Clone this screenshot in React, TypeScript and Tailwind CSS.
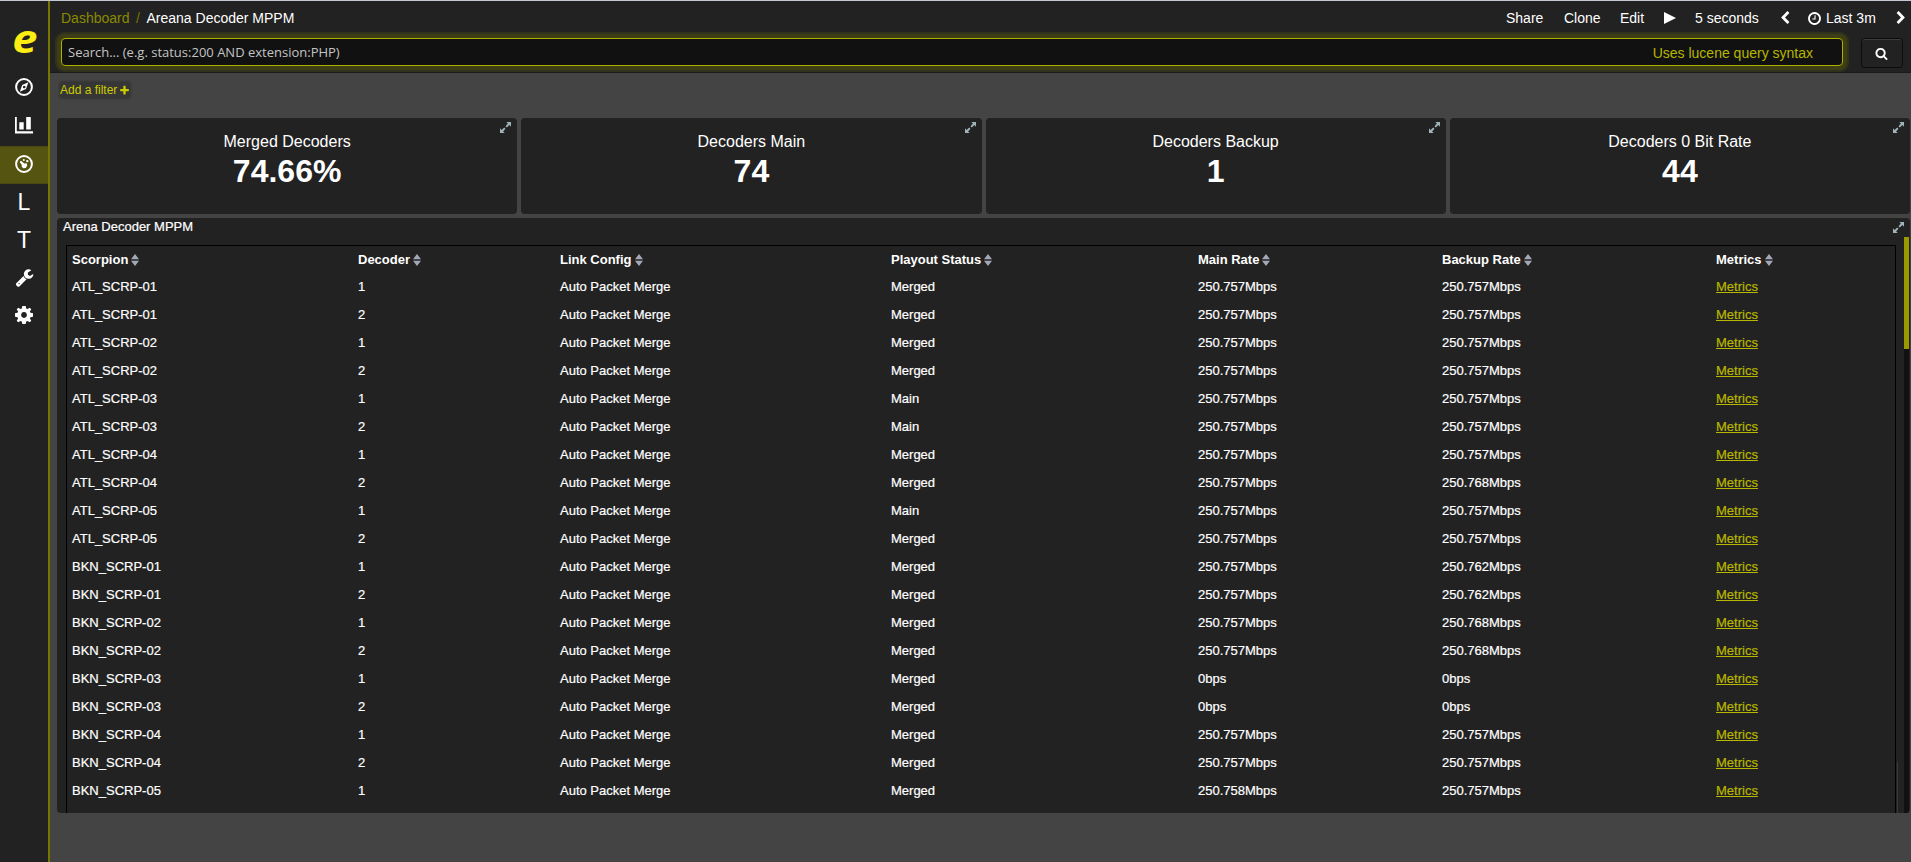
import React from "react";

const FA = {
  plus: "M1600 736v192q0 40-28 68t-68 28h-416v416q0 40-28 68t-68 28h-192q-40 0-68-28t-28-68v-416h-416q-40 0-68-28t-28-68v-192q0-40 28-68t68-28h416v-416q0-40 28-68t68-28h192q40 0 68 28t28 68v416h416q40 0 68 28t28 68z",
  search:
    "M1216 832q0-185-131.5-316.5t-316.5-131.5-316.5 131.5-131.5 316.5 131.5 316.5 316.5 131.5 316.5-131.5 131.5-316.5zm512 832q0 52-38 90t-90 38q-54 0-90-38l-343-342q-179 124-399 124-143 0-273.5-55.5t-225-150-150-225-55.5-273.5 55.5-273.5 150-225 225-150 273.5-55.5 273.5 55.5 225 150 150 225 55.5 273.5q0 220-124 399l343 343q37 37 37 90z",
  left: "M1427 301l-531 531 531 531q19 19 19 45t-19 45l-166 166q-19 19-45 19t-45-19l-742-742q-19-19-19-45t19-45l742-742q19-19 45-19t45 19l166 166q19 19 19 45t-19 45z",
  right:
    "M1363 877l-742 742q-19 19-45 19t-45-19l-166-166q-19-19-19-45t19-45l531-531-531-531q-19-19-19-45t19-45l166-166q19-19 45-19t45 19l742 742q19 19 19 45t-19 45z",
  clock:
    "M1024 544v448q0 14-9 23t-23 9h-320q-14 0-23-9t-9-23v-64q0-14 9-23t23-9h224v-352q0-14 9-23t23-9h64q14 0 23 9t9 23zm416 352q0-148-73-273t-198-198-273-73-273 73-198 198-73 273 73 273 198 198 273 73 273-73 198-198 73-273zm224 0q0 209-103 385.5t-279.5 279.5-385.5 103-385.5-103-279.5-279.5-103-385.5 103-385.5 279.5-279.5 385.5-103 385.5 103 279.5 279.5 103 385.5z",
  wrench:
    "M448 1472q0-26-19-45t-45-19-45 19-19 45 19 45 45 19 45-19 19-45zm644-420l-682 682q-37 37-90 37-52 0-91-37l-106-108q-38-36-38-90 0-53 38-91l681-681q39 98 114.500 173.500t173.500 114.500zm634-435q0 39-23 106-47 134-164.500 217.500t-258.500 83.500q-185 0-316.500-131.500t-131.500-316.500 131.500-316.500 316.500-131.500q58 0 121.500 16.500t107.500 46.500q16 11 16 28t-16 28l-293 169v224l193 107q5-3 79-48.500t135.500-81 70.500-35.500q15 0 23.500 10t8.500 25z",
};

function Glyph({ d, className }: { d: string; className: string }) {
  return (
    <svg viewBox="0 0 1792 1792" className={className} fill="currentColor">
      <path d={d} />
    </svg>
  );
}

function Compass() {
  return (
    <svg viewBox="0 0 18 18" className="size-[18px]">
      <circle cx="9" cy="9" r="7.9" fill="none" stroke="#fff" strokeWidth="2" />
      <path fill="#fff" fillRule="evenodd" d="M13.400 4.300 11 11 4.800 13.700 7.200 7zM9.200 7.700a1.300 1.300 0 1 0 .01 0z" />
    </svg>
  );
}

function Bars() {
  return (
    <svg viewBox="0 0 18 17" className="h-[17px] w-[18px]" fill="#fff">
      <path d="M0 0h1.800v14.300H18V16.500H0z" />
      <path d="M4.300 5.200h4.400v7.300H4.300zM11.200 0h4.600v12.500h-4.600z" />
    </svg>
  );
}

function Gauge() {
  return (
    <svg viewBox="0 0 18 18" className="mt-px size-[18px]" fill="#fff">
      <circle cx="9" cy="9" r="7.9" fill="none" stroke="#fff" strokeWidth="2" />
      <path d="M4.600 6.900L6 5.800l3.300 2.700 2.300-.2.700 2.200-1.500 2.600-2.600.2-1.600-1.900.3-1.500z" />
      <circle cx="8.800" cy="5" r="1" />
      <circle cx="12.300" cy="6.100" r="1.200" />
    </svg>
  );
}

function Gear() {
  return (
    <svg viewBox="-9 -9 18 18" className="size-[18px]" fill="#fff">
      <path
        fillRule="evenodd"
        d="M-1.700-9h3.400l.5 2.500 1.300.6L5.700-7.300 7.300-5.700 5.900-3.500l.6 1.300L9-1.700v3.400l-2.500.5-.6 1.300L7.300 5.700 5.700 7.300 3.500 5.900l-1.300.6L1.700 9h-3.400l-.5-2.500-1.300-.6L-5.700 7.300-7.300 5.700-5.900 3.500l-.6-1.300L-9 1.700v-3.400l2.500-.5.6-1.300L-7.300-5.700-5.700-7.300-3.500-5.900l1.300-.6zM0-2.900a2.900 2.900 0 1 0 .01 0z"
      />
    </svg>
  );
}

function Expand() {
  return (
    <svg viewBox="0 0 11 11" className="absolute right-[6px] top-[4px] size-[11px]" fill="#9fb3b8">
      <path d="M6.300 0H11v4.700L9.400 3.100 6.800 5.500 5.500 4.200 7.900 1.600zM4.700 11H0V6.300l1.600 1.600L4.200 5.500 5.500 6.800 3.100 9.400z" />
    </svg>
  );
}

function Sort() {
  return (
    <svg viewBox="0 0 8 12" className="ml-[3px] h-3 w-2" fill="#a3a8b8">
      <path d="M4 0l4 5.200H0zM4 12l4-5.200H0z" />
    </svg>
  );
}

const nav = [
  { id: "discover", icon: <Compass /> },
  { id: "visualize", icon: <Bars /> },
  { id: "dashboard", icon: <Gauge />, active: true },
  { id: "l", icon: <span className="pt-[3px] text-[23px] leading-none">L</span> },
  { id: "t", icon: <span className="pt-[3px] text-[23px] leading-none">T</span> },
  { id: "tools", icon: <Glyph d={FA.wrench} className="size-[19px]" /> },
  { id: "management", icon: <Gear /> },
];

const stats = [
  ["Merged Decoders", "74.66%"],
  ["Decoders Main", "74"],
  ["Decoders Backup", "1"],
  ["Decoders 0 Bit Rate", "44"],
];

const cols = "grid grid-cols-[286px_202px_331px_307px_244px_274px_1fr] pl-[5px]";
const headings = ["Scorpion", "Decoder", "Link Config", "Playout Status", "Main Rate", "Backup Rate", "Metrics"];

const a = "250.757Mbps";
const rows: [string, number, string, string, string][] = [
  ["ATL_SCRP-01", 1, "Merged", a, a],
  ["ATL_SCRP-01", 2, "Merged", a, a],
  ["ATL_SCRP-02", 1, "Merged", a, a],
  ["ATL_SCRP-02", 2, "Merged", a, a],
  ["ATL_SCRP-03", 1, "Main", a, a],
  ["ATL_SCRP-03", 2, "Main", a, a],
  ["ATL_SCRP-04", 1, "Merged", a, a],
  ["ATL_SCRP-04", 2, "Merged", a, "250.768Mbps"],
  ["ATL_SCRP-05", 1, "Main", a, a],
  ["ATL_SCRP-05", 2, "Merged", a, a],
  ["BKN_SCRP-01", 1, "Merged", a, "250.762Mbps"],
  ["BKN_SCRP-01", 2, "Merged", a, "250.762Mbps"],
  ["BKN_SCRP-02", 1, "Merged", a, "250.768Mbps"],
  ["BKN_SCRP-02", 2, "Merged", a, "250.768Mbps"],
  ["BKN_SCRP-03", 1, "Merged", "0bps", "0bps"],
  ["BKN_SCRP-03", 2, "Merged", "0bps", "0bps"],
  ["BKN_SCRP-04", 1, "Merged", a, a],
  ["BKN_SCRP-04", 2, "Merged", a, a],
  ["BKN_SCRP-05", 1, "Merged", "250.758Mbps", a],
];

export default function App() {
  return (
    <div className="flex h-[862px] w-[1911px] overflow-hidden border-t border-[#c4c8d4] bg-[#444] font-['Liberation_Sans',Arial,sans-serif] text-white">
      <aside className="flex w-[50px] shrink-0 flex-col border-r-2 border-[#777700] bg-[#222]">
        <div className="flex h-[69px] items-center justify-center pl-[2px] pt-[3px]">
          <span className="block origin-center scale-x-[1.16] font-['Open_Sans',sans-serif] text-[39px] font-bold italic leading-none text-[#fcee12]">
            e
          </span>
        </div>
        {nav.map((n) => (
          <div
            key={n.id}
            className={
              n.active
                ? "flex h-[38px] items-center justify-center border-y border-[#4a4a10] bg-[#555511] pb-1"
                : "flex h-[38px] items-center justify-center pb-1"
            }
          >
            {n.icon}
          </div>
        ))}
      </aside>

      <main className="flex min-w-0 flex-1 flex-col">
        <header className="h-[72px] border-b border-[#1a1a1a] bg-[#222] pl-[11px] text-[14px]">
          <div className="flex h-[37px] items-center pb-[3px]">
            <span className="text-[#8a8a00]">Dashboard</span>
            <span className="w-[17px] text-center text-[#777700]">/</span>
            <span>Areana Decoder MPPM</span>
            <div className="ml-auto flex items-center pr-[3px]">
              <span className="w-[58px]">Share</span>
              <span className="w-[56px]">Clone</span>
              <span className="w-[44px]">Edit</span>
              <svg viewBox="0 0 12 12" className="mr-[19px] size-3" fill="#fff">
                <path d="M0 0l12 6L0 12z" />
              </svg>
              <span className="w-[83px]">5 seconds</span>
              <Glyph d={FA.left} className="mr-[15px] size-[14px]" />
              <Glyph d={FA.clock} className="mr-[4px] size-[15px]" />
              <span className="w-[68px]">Last 3m</span>
              <Glyph d={FA.right} className="size-[14px]" />
            </div>
          </div>
          <div className="flex">
            <div className="flex h-[28px] w-[1782px] items-center justify-between rounded-[4px] border border-[#b0b000] bg-[#111] pl-[6px] pr-[29px] shadow-[0_0_0_4px_rgba(119,119,0,0.16),0_0_1px_6px_rgba(119,119,0,0.2)]">
              <span className="pt-px font-['Open_Sans',sans-serif] text-[13px] text-[#c4c4c4]">
                Search... (e.g. status:200 AND extension:PHP)
              </span>
              <span className="pt-[2px] text-[#b6b600]">Uses lucene query syntax</span>
            </div>
            <div className="ml-[18px] flex h-[30px] w-[42px] items-center justify-center rounded-[3px] border border-[#0c0c0c] bg-[#222] pr-px shadow-[inset_0_1px_0_#3c3c3c]">
              <Glyph d={FA.search} className="size-[13px]" />
            </div>
          </div>
        </header>

        <div className="flex h-[45px] items-start pl-[10px] pt-[9px] text-[12px] text-[#cccc00]">
          <span className="flex h-[16px] items-center gap-[3px] rounded-[3px] bg-[#363636] shadow-[0_0_2px_1px_#363636]">
            Add a filter <Glyph d={FA.plus} className="-ml-px size-[11px]" />
          </span>
        </div>

        <div className="flex flex-1 flex-col gap-1 pl-[7px] pr-px">
          <div className="flex gap-1">
            {stats.map(([label, value]) => (
              <section
                key={label}
                className="relative flex h-[96px] flex-1 flex-col items-center rounded-[4px] bg-[#222] pt-[14px]"
              >
                <Expand />
                <div className="text-[16px] leading-[20px]">{label}</div>
                <div className="text-[32px] font-bold leading-[39px]">{value}</div>
              </section>
            ))}
          </div>

          <section className="relative flex h-[595px] flex-col overflow-hidden rounded-[4px] bg-[#222] text-[13px]">
            <Expand />
            <h2 className="h-[19px] shrink-0 pl-[6px] leading-[17px] [-webkit-text-stroke:0.2px]">Arena Decoder MPPM</h2>
            <div className="flex flex-1">
              <div className="ml-[9px] mt-[8px] w-[1830px] border-x border-t border-black">
                <div className={`${cols} h-[27px] items-center font-bold`}>
                  {headings.map((h) => (
                    <span key={h} className="flex items-center">
                      {h}
                      <Sort />
                    </span>
                  ))}
                </div>
                {rows.map((r, i) => (
                  <div key={i} className={`${cols} h-[28px] items-center [-webkit-text-stroke:0.2px]`}>
                    <span>{r[0]}</span>
                    <span>{r[1]}</span>
                    <span>Auto Packet Merge</span>
                    <span>{r[2]}</span>
                    <span>{r[3]}</span>
                    <span>{r[4]}</span>
                    <span className="text-[#b8b800] underline">Metrics</span>
                  </div>
                ))}
              </div>
              <div className="ml-px h-[51px] w-px self-end bg-[#3a3a3a]" />
              <div className="ml-auto mr-px w-[5px] bg-[#111]">
                <div className="h-[112px] bg-[#999900]" />
              </div>
            </div>
          </section>
        </div>
      </main>
    </div>
  );
}
